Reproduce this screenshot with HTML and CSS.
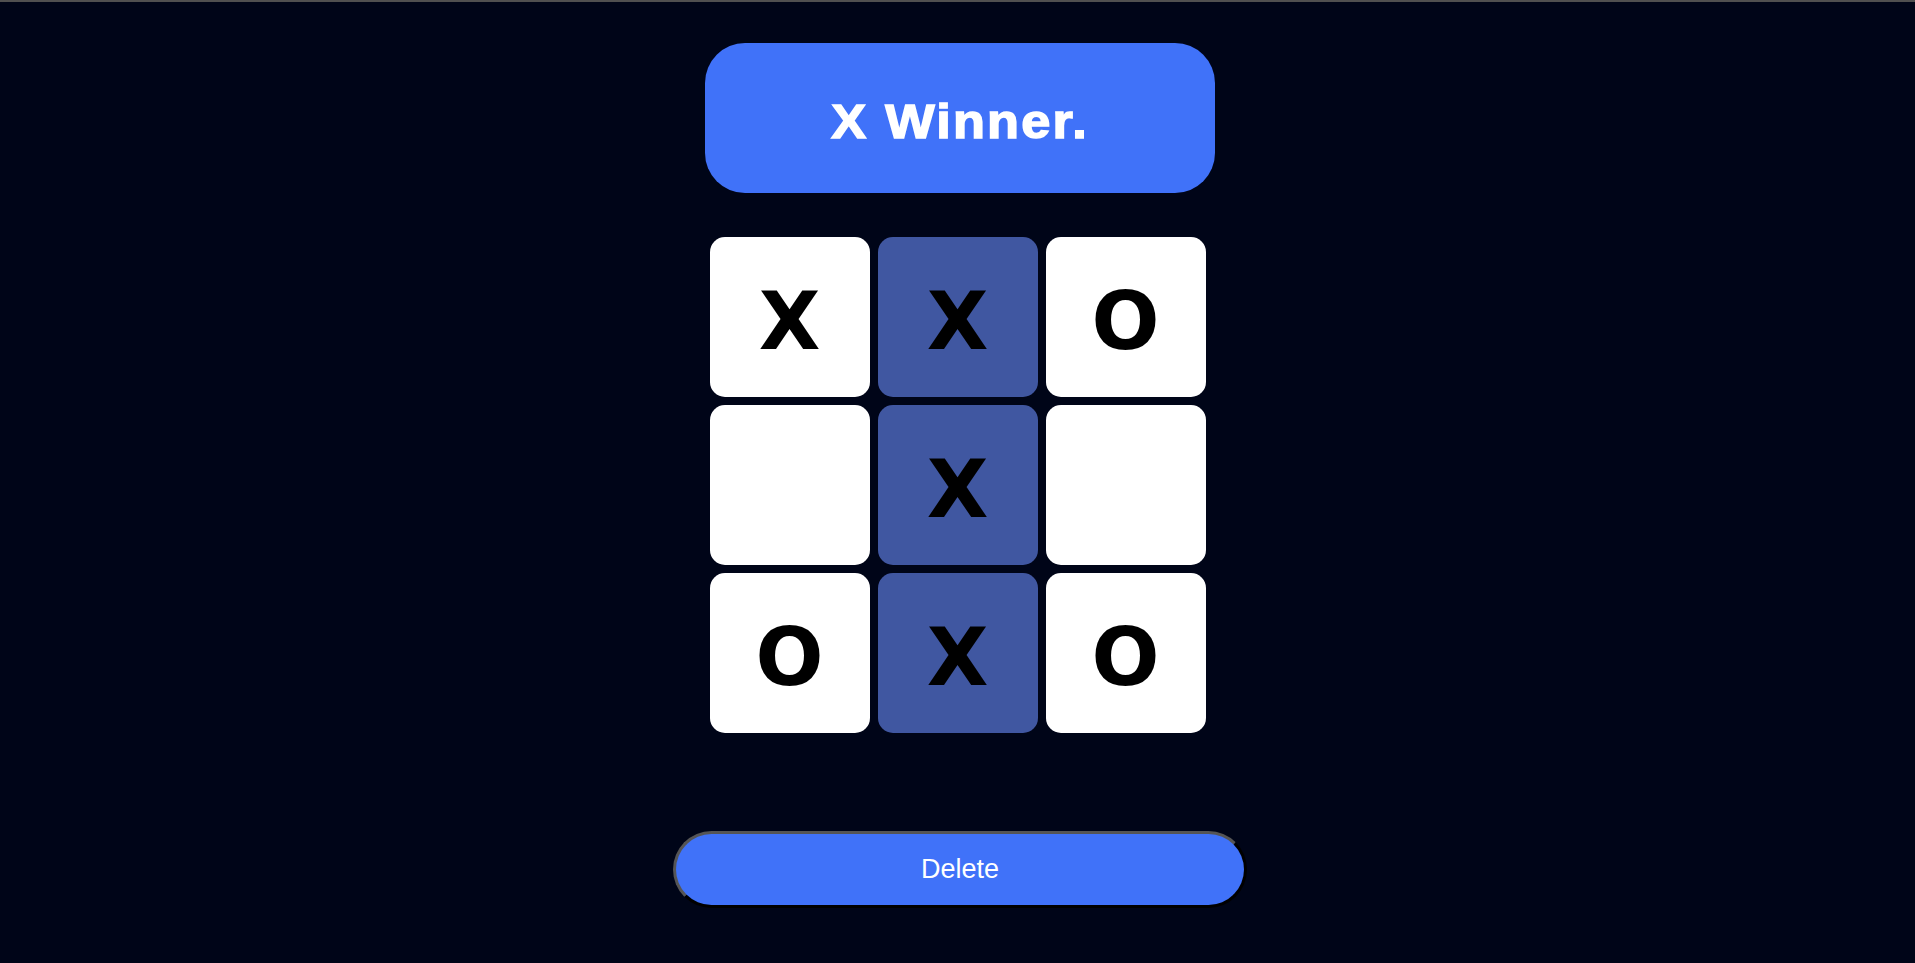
FILE: index.html
```html
<!DOCTYPE html>
<html lang="en">
<head>
<meta charset="utf-8">
<title>Tic Tac Toe</title>
<link rel="stylesheet" href="styles.css">
</head>
<body>
<main class="game">
  <div class="status"><span class="status-text">X Winner.</span></div>
  <div class="board">
    <div class="cell">X</div>
    <div class="cell win">X</div>
    <div class="cell">O</div>
    <div class="cell"></div>
    <div class="cell win">X</div>
    <div class="cell"></div>
    <div class="cell">O</div>
    <div class="cell win">X</div>
    <div class="cell">O</div>
  </div>
  <button class="reset">Delete</button>
</main>
</body>
</html>
```
FILE: styles.css
```css
html, body {
  margin: 0;
  padding: 0;
  height: 100%;
}
body {
  background: #000518;
  border-top: 2px solid #505050;
  box-sizing: border-box;
  font-family: "Liberation Sans", Arial, sans-serif;
}
.game {
  display: flex;
  flex-direction: column;
  align-items: center;
  padding-top: 41px;
}
.status {
  width: 510px;
  height: 150px;
  margin-left: 5px;
  box-sizing: border-box;
  border-radius: 40px;
  background: #4072f9;
  color: #ffffff;
  font-family: "Liberation Sans", Arial, sans-serif;
  font-weight: 700;
  font-size: 48px;
  display: flex;
  align-items: center;
  justify-content: center;
}
.status-text {
  display: inline-block;
  letter-spacing: 2px;
  -webkit-text-stroke: 1.5px #ffffff;
  transform: scaleX(1.09);
  margin-top: 6px;
}
.board {
  margin-top: 44px;
  display: grid;
  grid-template-columns: repeat(3, 160px);
  grid-template-rows: repeat(3, 160px);
  gap: 8px;
}
.cell {
  background: #ffffff;
  border-radius: 15px;
  display: flex;
  align-items: center;
  justify-content: center;
  font-family: "DejaVu Sans", sans-serif;
  font-weight: 700;
  font-size: 80px;
  color: #000000;
  padding-top: 9px;
  box-sizing: border-box;
}
.cell.win {
  background: #4057a1;
}
.reset {
  margin-top: 98px;
  margin-left: 5px;
  width: 574px;
  height: 77px;
  box-sizing: border-box;
  border: 3px solid;
  border-color: #555555 #000000 #000000 #555555;
  border-radius: 40px;
  background: #4072f9;
  color: #ffffff;
  font-family: "Liberation Sans", Arial, sans-serif;
  font-size: 27px;
  padding: 0;
}
```
